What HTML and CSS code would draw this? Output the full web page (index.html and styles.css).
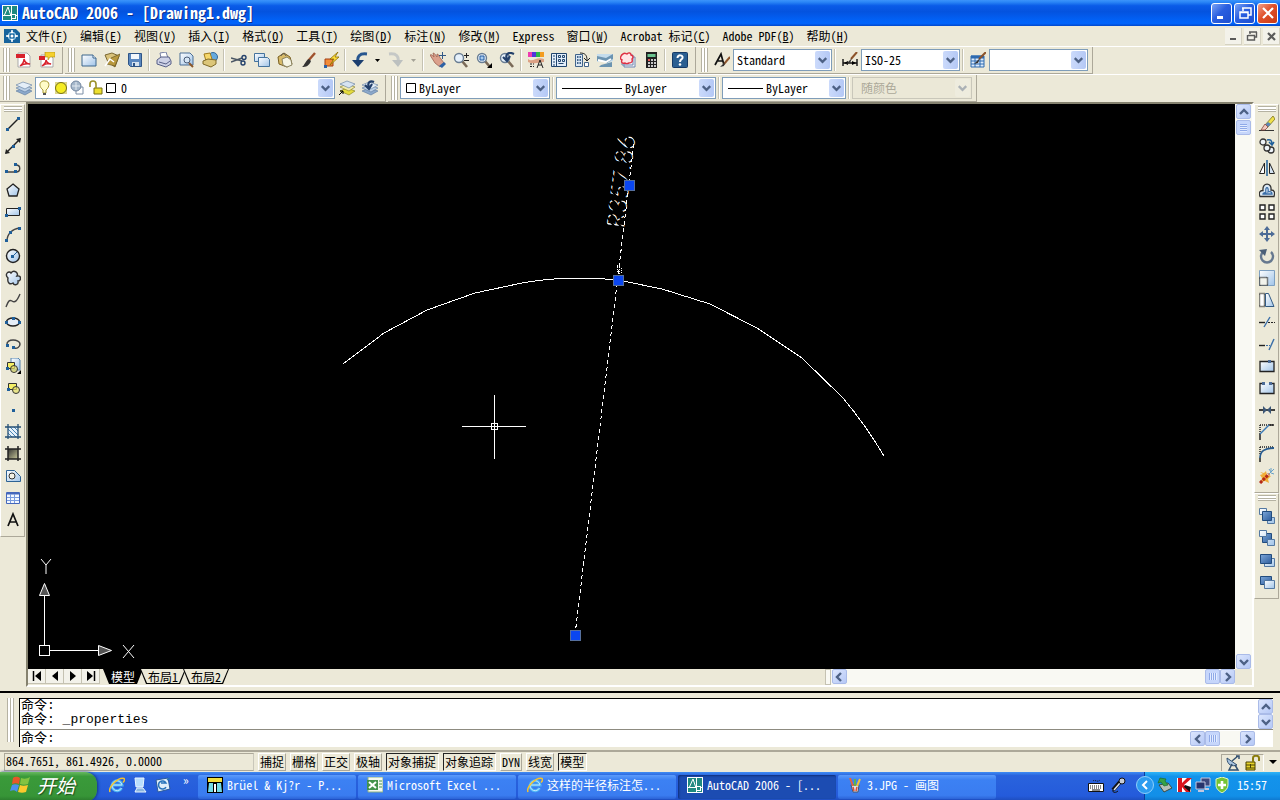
FILE: index.html
```html
<!DOCTYPE html>
<html lang="zh-CN">
  <head>
    <meta charset="UTF-8" />
    <meta name="viewport" content="width=device-width, initial-scale=1.0" />
    <title>AutoCAD 2006 - [Drawing1.dwg]</title>
    <link rel="stylesheet" href="styles.css">
  </head>
  <body>
    <!-- shared symbols -->
    <svg class="symbols" aria-hidden="true">
      <defs>
        <linearGradient id="pale" x1="0" y1="0" x2="1" y2="1">
          <stop offset="0" stop-color="#fff" /><stop offset="1" stop-color="#9fc3e8" />
        </linearGradient>
        <linearGradient id="deep" x1="0" y1="0" x2="1" y2="1">
          <stop offset="0" stop-color="#7da7d9" /><stop offset="1" stop-color="#2c5c9c" />
        </linearGradient>
        <linearGradient id="dusk" x1="0" y1="0" x2="1" y2="1">
          <stop offset="0" stop-color="#333" /><stop offset="1" stop-color="#c8c89a" />
        </linearGradient>
        <pattern id="dashes" width="5" height="5" patternUnits="userSpaceOnUse" patternTransform="rotate(45)">
          <path d="M0 0h3v5H0z" fill="#fff" />
        </pattern>
      </defs>
      <symbol id="down" viewBox="0 0 16 16"><path d="M4 6l4 4 4-4" fill="none" stroke="#4d6185" stroke-width="2.4" /></symbol>
      <symbol id="up" viewBox="0 0 16 16"><path d="M4 10l4-4 4 4" fill="none" stroke="#4d6185" stroke-width="2.4" /></symbol>
      <symbol id="left" viewBox="0 0 16 16"><path d="M10 4L6 8l4 4" fill="none" stroke="#4d6185" stroke-width="2.4" /></symbol>
      <symbol id="right" viewBox="0 0 16 16"><path d="M6 4l4 4-4 4" fill="none" stroke="#4d6185" stroke-width="2.4" /></symbol>
      <symbol id="logo" viewBox="0 0 16 16">
        <rect x=".5" y=".5" width="15" height="15" fill="#1f8a80" stroke="#fff" />
        <path d="M2 11L6 2l3 9M0 10.500h16M9.500 1v14" stroke="#fff" fill="none" />
        <rect x="9.500" y="9.500" width="4" height="4" fill="#1f8a80" stroke="#fff" />
      </symbol>
      <symbol id="ie" viewBox="0 0 16 16">
        <path d="M12.500 11a5 5 0 1 1 .5-3H4" fill="none" stroke="#4db4f5" stroke-width="3" />
        <path d="M12.500 11a5 5 0 1 1 .5-3H4" fill="none" stroke="#c2e9ff" stroke-width="1" />
        <path d="M1 15C-1 10 9 0 15 1.500c1 1 0 3-1 4" fill="none" stroke="#f2c230" stroke-width="1.500" />
      </symbol>
      <symbol id="layers" viewBox="0 0 16 16">
        <path d="M0 11l7-3 9 3-7 4z" fill="#8ca9cb" stroke="#5b789d" stroke-width=".6" />
        <path d="M0 8l7-3 9 3-7 4z" fill="#bcd0e6" stroke="#5b789d" stroke-width=".6" />
        <path d="M0 5l7-3 9 3-7 4z" fill="#e4eef8" stroke="#5b789d" stroke-width=".6" />
      </symbol>
      <symbol id="brush" viewBox="0 0 16 16">
        <path d="M15 1l-7 8" stroke="#a0522d" stroke-width="2.400" /><path d="M9 7l2 2c-2 5-5 6-9 6 3-2 3-6 7-8z" fill="#333" />
      </symbol>
      <symbol id="lens" viewBox="0 0 16 16">
        <path d="M9 9l5 6" stroke="#7a6a58" stroke-width="2.600" /><circle cx="6" cy="6" r="4.500" fill="#e6f1fb" stroke="#697d93" stroke-width="1.400" />
      </symbol>
    </svg>

    <div class="window">
      <header class="titlebar">
        <svg class="icon"><use href="#logo" /></svg>
        <h1>AutoCAD 2006 - [Drawing1.dwg]</h1>
        <div class="caption-buttons">
          <button aria-label="Minimize"><svg class="icon"><path d="M3 12.500h6" stroke="#fff" stroke-width="3" /></svg></button>
          <button aria-label="Restore"><svg class="icon"><path d="M6 6V3h8v7h-3M5 3h9M3 7h8v6H3zM3 7.500h8" stroke="#fff" stroke-width="1.500" fill="none" /></svg></button>
          <button class="close" aria-label="Close"><svg class="icon"><path d="M3 3l10 10M13 3L3 13" stroke="#fff" stroke-width="2.200" /></svg></button>
        </div>
      </header>

      <nav class="menubar">
        <svg class="icon menu-icon"><path d="M0 1h12l4 4v10H0z" fill="#17639c" /><path d="M8 2v12M2 8h12" stroke="#fff" stroke-width="1.500" /><path d="M5 5h6v6H5z" fill="#17639c" stroke="#9cd0ee" /><path d="M8 3l2 2H6zM8 13l2-2H6zM3 8l2-2v4zM13 8l-2-2v4z" fill="#fff" /><circle cx="8" cy="8" r="1.500" fill="#fff" /></svg>
        <button>文件(<u>F</u>)</button>
        <button>编辑(<u>E</u>)</button>
        <button>视图(<u>V</u>)</button>
        <button>插入(<u>I</u>)</button>
        <button>格式(<u>O</u>)</button>
        <button>工具(<u>T</u>)</button>
        <button>绘图(<u>D</u>)</button>
        <button>标注(<u>N</u>)</button>
        <button>修改(<u>M</u>)</button>
        <button>E<u>x</u>press</button>
        <button>窗口(<u>W</u>)</button>
        <button>Acrobat 标记(<u>C</u>)</button>
        <button>Adobe PDF(<u>B</u>)</button>
        <button>帮助(<u>H</u>)</button>
        <div class="doc-buttons">
          <button aria-label="Minimize drawing"><svg class="icon"><path d="M5 11h6" stroke="#5a5a5a" stroke-width="2" /></svg></button>
          <button aria-label="Restore drawing"><svg class="icon"><path d="M6 6V4M5 4h8M12.500 4v5H11M4 7.500h7M3.500 7v5h7V7" stroke="#5a5a5a" stroke-width="1.400" fill="none" /></svg></button>
          <button aria-label="Close drawing"><svg class="icon"><path d="M5 5l7 7M12 5l-7 7" stroke="#5a5a5a" stroke-width="2.200" /></svg></button>
        </div>
      </nav>

      <div class="toolbar-row">
        <div class="toolbar">
          <i class="grip"></i>
          <button class="tool" aria-label="Create PDF"><svg class="icon"><path d="M2 1h9l3 3v11H2z" fill="#fff" stroke="#a9a9a9" /><path d="M0 2h9v4H0z" fill="#d8222c" /><path d="M4 14c3-2 4-5 4-7 1 4 3 5 6 5-4-1-7 0-10 2z" fill="none" stroke="#d8222c" stroke-width="1.500" /></svg></button>
          <button class="tool" aria-label="PDF comments"><svg class="icon"><path d="M2 3h9l3 3v9H2z" fill="#fff" stroke="#a9a9a9" /><path d="M6 0h10v5h-5l-2 3V5H6z" fill="#f5d02c" stroke="#a88c10" stroke-width=".6" /><path d="M0 4h6v4H0z" fill="#d8222c" /><path d="M3 14c3-2 4-4 4-6 1 3 3 4 5 4-3-1-6 0-9 2z" fill="none" stroke="#d8222c" stroke-width="1.500" /></svg></button>
        </div>
        <div class="toolbar">
          <i class="grip"></i>
          <button class="tool" aria-label="New"><svg class="icon"><path d="M1 3h11l3 3v8H1z" fill="url(#pale)" stroke="#3d668c" /><path d="M12 3v3h3" fill="#fff" stroke="#3d668c" /></svg></button>
          <button class="tool" aria-label="Open"><svg class="icon"><path d="M1 3l7-2 7 3-4 11-7-5z" fill="#d9c27a" stroke="#7a6731" /><path d="M3 12l4-6 9-4-5 12z" fill="#b8983e" stroke="#6a5720" stroke-width=".7" /><path d="M1 14l5-7 4 3" stroke="#fff" fill="none" stroke-width="1.500" /></svg></button>
          <button class="tool" aria-label="Save"><svg class="icon"><path d="M1.500 1.500h13v13h-11l-2-2z" fill="#5a87bf" stroke="#2f5587" /><path d="M4 2h8v5H4z" fill="#f3f7fb" /><path d="M5 10h7v4H5z" fill="#d5e2ef" /><path d="M6 11h2v3H6z" fill="#2f5587" /></svg></button>
          <i class="sep"></i>
          <button class="tool" aria-label="Plot"><svg class="icon"><path d="M4 1l6-1 2 6H5z" fill="#fff" stroke="#7780a3" /><path d="M1 8l4-3h8l2 4v3l-5 3-9-3z" fill="#cdd1e6" stroke="#575f86" /><path d="M3 10l7 2 4-3" stroke="#575f86" fill="none" /></svg></button>
          <button class="tool" aria-label="Plot preview"><svg class="icon"><path d="M1 1h10l3 3v9H1z" fill="url(#pale)" stroke="#4b6f96" /><path d="M10 11l4 4" stroke="#8b572a" stroke-width="2" /><circle cx="8" cy="8" r="3" fill="#d6e6f5" stroke="#4b5d78" /></svg></button>
          <button class="tool" aria-label="Publish"><svg class="icon"><circle cx="11" cy="5" r="4.500" fill="#65a9dd" stroke="#326899" /><path d="M2 2l6-1 2 6-6 2z" fill="#f5d76b" stroke="#a17b1c" /><path d="M1 9l5-2 8 1v4l-5 3-8-3z" fill="#dcc679" stroke="#806a28" /></svg></button>
          <i class="sep"></i>
          <button class="tool" aria-label="Cut"><svg class="icon"><path d="M0 6l11 3M0 10l11-4" stroke="#4a5664" stroke-width="1.400" /><circle cx="13" cy="5.500" r="2" fill="none" stroke="#23416b" stroke-width="1.400" /><circle cx="12" cy="11" r="2" fill="none" stroke="#23416b" stroke-width="1.400" /></svg></button>
          <button class="tool" aria-label="Copy"><svg class="icon"><path d="M.5 1.500h10v8H.5z" fill="url(#pale)" stroke="#45739d" /><path d="M4.500 5.500h9l2 2v7h-11z" fill="url(#pale)" stroke="#45739d" /></svg></button>
          <button class="tool" aria-label="Paste"><svg class="icon"><path d="M1 5l6-4 6 4 2 7-5 3-8-3z" fill="#d8bb69" stroke="#7a6022" /><path d="M5 7l5-2 4 3 1 5-5 2-4-2z" fill="#f5f4e4" stroke="#8a8361" /><path d="M4 4c1-3 4-3 5 0" stroke="#555" fill="none" /></svg></button>
          <button class="tool" aria-label="Match properties"><svg class="icon"><use href="#brush" /></svg></button>
          <button class="tool" aria-label="Block editor"><svg class="icon"><path d="M2 7h8v7H2z" fill="#f28c38" stroke="#a33e15" /><path d="M15 0L7 7h4l-4 6 9-8h-4l3-5z" fill="#ffde3a" stroke="#8c6c00" stroke-width=".8" /><path d="M1 13h3v3H1z" fill="#2b62a6" /></svg></button>
          <i class="sep"></i>
          <button class="tool" aria-label="Undo"><svg class="icon"><path d="M15 2C7 1 5 5 6 10" fill="none" stroke="#27568f" stroke-width="3" /><path d="M0 8h12l-6 7z" fill="#1c3f70" /></svg></button>
          <button class="tool drop" aria-label="Undo list"><svg><path d="M1 1h5L3.500 4z" /></svg></button>
          <button class="tool" aria-label="Redo"><svg class="icon"><path d="M1 2c8-1 10 3 9 8" fill="none" stroke="#c5c8c6" stroke-width="3" /><path d="M4 8h11l-5 7z" fill="#bcc0bf" /></svg></button>
          <button class="tool drop off" aria-label="Redo list"><svg><path d="M1 1h5L3.500 4z" /></svg></button>
          <i class="sep"></i>
          <button class="tool" aria-label="Pan"><svg class="icon"><path d="M0 3c2-1 3 1 4 2L3 1c2 0 3 3 4 4V2c2 0 2 3 4 5l3 4-4 4-5-4z" fill="#dba08c" stroke="#9c6251" stroke-width=".8" /><path d="M9 14l5-4 2 2-4 4z" fill="#2d62a5" /><path d="M12.500 0v7M9 3.500h7" stroke="#315887" /></svg></button>
          <button class="tool" aria-label="Zoom realtime"><svg class="icon"><use href="#lens" /><path d="M13.500 1v5M11 3.500h5M11 8.500h5" stroke="#222" /></svg></button>
          <button class="tool" aria-label="Zoom window"><svg class="icon"><use href="#lens" /><path d="M4 4h4v4H4z" fill="#a9cdf0" stroke="#245aa0" /><path d="M16 11v5h-5z" /></svg></button>
          <button class="tool" aria-label="Zoom previous"><svg class="icon"><use href="#lens" /><path d="M15 2C9-1 6 3 8 7M4 5l4 4 3-5" fill="none" stroke="#23406b" stroke-width="2.200" /></svg></button>
          <i class="sep"></i>
          <button class="tool" aria-label="Properties"><svg class="icon"><path d="M0 0h4v5H0z" fill="#ee3bb0" /><path d="M4 0h4v5H4z" fill="#5135dd" /><path d="M8 0h4v5H8z" fill="#2db44b" /><path d="M12 0h4v5h-4z" fill="#f39c1f" /><path d="M0 7c5 4 8-3 16 0v3c-6 0-8 3-16 0z" fill="#dca184" /><path d="M2 12h4M2 14.500h4" stroke="#222" stroke-dasharray="2 1" /><path d="M9 16l3-8 3 8M10 13h4" stroke="#222" fill="none" /></svg></button>
          <button class="tool" aria-label="DesignCenter"><svg class="icon"><path d="M.5 1.500h15v13H.5z" fill="#e2eefa" stroke="#20456e" /><path d="M5.500 2v12" stroke="#20456e" /><path d="M2 4h2M2 7h2M2 10h2M2 13h2" stroke="#20456e" /><path d="M7.500 3.500h2v2h-2zM11.500 3.500h2v2h-2zM7.500 7.500h2v2h-2zM11.500 7.500h2v2h-2zM7.500 11.500h5" fill="none" stroke="#20456e" /></svg></button>
          <button class="tool" aria-label="Tool palettes"><svg class="icon"><path d="M1.500 2.500h7v12h-7z" fill="#dbe8f5" stroke="#41648b" /><path d="M3 5h4M3 8h4M3 11h4" stroke="#41648b" stroke-width="2" stroke-dasharray="1.500 1" /><path d="M6 1c5 0 7 2 7 7M10 6l3 3 3-3" fill="none" stroke="#222" /><path d="M10.500 10.500h4v4h-4z" fill="#fff" stroke="#41648b" /></svg></button>
          <button class="tool" aria-label="Sheet set manager"><svg class="icon"><path d="M0 2h16v7l-5 2-4-3-7 2z" fill="#c4dcec" /><path d="M0 4l9 2 7-4v5l-6 4-4-2H0zM4 13l11-3v5H2z" fill="#6c94b1" /><path d="M1 8l8 2 5-3" stroke="#fff" stroke-width="2" fill="none" /></svg></button>
          <button class="tool" aria-label="Markup set manager"><svg class="icon"><path d="M4 5h11v10H4zM2 3h11v10H2z" fill="#f4f4f4" stroke="#6d87b3" /><path d="M3 2c2-2 3 0 4 0 2-2 4-1 4 1 3 1 2 3 1 4 1 3-1 4-3 4-2 1-3 1-4 0-3 1-4-1-3-3-3-1-1-5 1-6z" fill="#ffe6e6" stroke="#df2f42" stroke-width="1.400" /></svg></button>
          <button class="tool" aria-label="QuickCalc"><svg class="icon"><path d="M3 0h11v16H3z" fill="#202020" /><path d="M4.500 2h8v3h-8z" fill="#6ac28e" /><path d="M5 8h8M5 11h8M5 14h8" stroke="#fff" stroke-width="1.600" stroke-dasharray="2 1" /><path d="M5 8h2" stroke="#e33" stroke-width="1.600" /></svg></button>
          <i class="sep"></i>
          <button class="tool" aria-label="Help"><svg class="icon"><rect x=".5" y=".5" width="15" height="15" rx="1" fill="#2b5f91" stroke="#163a66" /><path d="M5.500 6c0-4 6-3 5 0-.5 1.500-2.500 1.500-2.500 4" fill="none" stroke="#fff" stroke-width="2" /><circle cx="8" cy="12.500" r="1.300" fill="#fff" /></svg></button>
        </div>
        <div class="toolbar">
          <i class="grip"></i>
          <button class="tool" aria-label="Text style"><svg class="icon"><path d="M1 13L7 2l3 11M4 9h5" stroke="#111" stroke-width="1.700" fill="none" /><path d="M16 5l-6 7" stroke="#8d542b" stroke-width="2" /><path d="M11 10l-1 4-4 1z" fill="#333" /></svg></button>
          <span class="combo w-style"><select aria-label="Text style"><option>Standard</option></select><svg class="arrow"><use href="#down" /></svg></span>
          <i class="sep"></i>
          <button class="tool" aria-label="Dimension style"><svg class="icon"><path d="M1 7v7M15 7v7M1 11h14" stroke="#111" stroke-width="1.400" /><path d="M2 11l4-2v4zM14 11l-4-2v4z" /><path d="M15 0L9 7" stroke="#8d542b" stroke-width="2" /><path d="M10 6l-2 5-4 1z" fill="#333" /></svg></button>
          <span class="combo w-style"><select aria-label="Dimension style"><option>ISO-25</option></select><svg class="arrow"><use href="#down" /></svg></span>
          <i class="sep"></i>
          <button class="tool" aria-label="Table style"><svg class="icon"><path d="M1 4h13v11H1z" fill="#dceafa" stroke="#2d6ab0" /><path d="M1 5h13" stroke="#2d6ab0" stroke-width="3" /><path d="M1 9h13M1 12h13M5 6v9M10 6v9" stroke="#2d6ab0" /><path d="M16 0L9 7" stroke="#8d542b" stroke-width="2" /><path d="M10 6l-2 5-4 1z" fill="#333" /></svg></button>
          <span class="combo w-style"><select aria-label="Table style"><option></option></select><svg class="arrow"><use href="#down" /></svg></span>
        </div>
      </div>

      <div class="toolbar-row">
        <div class="toolbar">
          <i class="grip"></i>
          <button class="tool" aria-label="Layer properties"><svg class="icon"><use href="#layers" /></svg></button>
          <span class="combo w-layer">
            <select aria-label="Layer"><option>0</option></select>
            <svg class="mark" width="80" height="18">
              <path d="M5 11c-6-5-2-10 2-9 5 0 5 6 1 9v3H5z" fill="#fffcc9" stroke="#a79832" /><path d="M5 15h3" stroke="#555" stroke-width="2" />
              <path d="M17 3h12v12H17z" fill="#ddd68a" /><circle cx="23" cy="9" r="5.500" fill="#f5ec23" stroke="#77711a" />
              <path d="M38 8h7v7h-7z" fill="#fff" stroke="#7c8fa6" /><circle cx="38" cy="7" r="5" fill="#a5b7ca" stroke="#7387a0" /><path d="M34 7h8M38 3v8" stroke="#e4ebf2" />
              <path d="M56 9h8v6h-8z" fill="#ecdf2e" stroke="#756d13" /><path d="M52 8V5c0-4 6-4 6 0v4" fill="none" stroke="#9b912a" stroke-width="1.600" />
              <path d="M68.500 4.500h9v9h-9z" fill="#fff" stroke="#000" />
            </svg>
            <svg class="arrow"><use href="#down" /></svg>
          </span>
          <button class="tool" aria-label="Make layer current"><svg class="icon"><path d="M1 11l7-3 8 3-6 4z" fill="#e5dc3e" stroke="#807817" stroke-width=".6" /><path d="M1 7l7-3 8 3-6 4z" fill="#f2ebaf" stroke="#807817" stroke-width=".6" /><path d="M1 4l7-3 8 3-6 4z" fill="#d6e3f1" stroke="#5b789d" stroke-width=".6" /><path d="M0 15l4-4M1 11h3v3" stroke="#000" fill="none" /></svg></button>
          <button class="tool" aria-label="Layer previous"><svg class="icon"><use href="#layers" /><path d="M12 2C8 0 5 3 7 7M3 5l4 4 3-5" fill="none" stroke="#23406b" stroke-width="2.200" /></svg></button>
        </div>
        <div class="toolbar">
          <i class="grip"></i>
          <span class="combo w-color">
            <select aria-label="Color"><option>ByLayer</option></select>
            <svg class="mark" width="16" height="18"><path d="M3.500 4.500h9v9h-9z" fill="#fff" stroke="#000" /></svg>
            <svg class="arrow"><use href="#down" /></svg>
          </span>
          <i class="sep"></i>
          <span class="combo w-ltype">
            <select aria-label="Linetype"><option>ByLayer</option></select>
            <svg class="mark" width="66" height="18"><path d="M3 9.500h60" stroke="#000" /></svg>
            <svg class="arrow"><use href="#down" /></svg>
          </span>
          <i class="sep"></i>
          <span class="combo w-lweight">
            <select aria-label="Lineweight"><option>ByLayer</option></select>
            <svg class="mark" width="40" height="18"><path d="M3 9.500h35" stroke="#000" /></svg>
            <svg class="arrow"><use href="#down" /></svg>
          </span>
          <i class="sep"></i>
          <span class="combo w-plot disabled"><select aria-label="Plot style" disabled><option>随颜色</option></select><svg class="arrow"><use href="#down" /></svg></span>
        </div>
      </div>

      <main class="workspace">
        <aside class="dock">
          <div class="toolbar vertical">
            <i class="grip"></i>
            <button class="tool" aria-label="Line"><svg class="icon"><path d="M2 14L14 2" stroke="#222" stroke-width="1.400" /><path d="M1 12h3v3H1zM12 1h3v3h-3z" fill="#1f5f9a" /></svg></button>
            <button class="tool" aria-label="Construction line"><svg class="icon"><path d="M1 15L15 1" stroke="#222" stroke-width="1.400" /><path d="M16 0l-1 5-4-4zM0 16l1-5 4 4z" fill="#222" /><path d="M7 7h3v3H7z" fill="#1f5f9a" /></svg></button>
            <button class="tool" aria-label="Polyline"><svg class="icon"><path d="M1 12h10c5 0 5-7 0-7" fill="none" stroke="#444" stroke-width="1.400" /><path d="M0 10h3v3H0zM9 10h3v3H9zM9 3h3v3H9z" fill="#1f5f9a" /></svg></button>
            <button class="tool" aria-label="Polygon"><svg class="icon"><path d="M8 2l6 5-2 7H4L2 7z" fill="url(#pale)" stroke="#222" stroke-width="1.300" /></svg></button>
            <button class="tool" aria-label="Rectangle"><svg class="icon"><path d="M1.500 4.500h13v7h-13z" fill="url(#pale)" stroke="#222" /><path d="M0 10h3v3H0zM13 3h3v3h-3z" fill="#1f5f9a" /></svg></button>
            <button class="tool" aria-label="Arc"><svg class="icon"><path d="M2 15C2 8 7 3 15 2" fill="none" stroke="#444" stroke-width="1.400" /><path d="M0 13h3v3H0zM4 5h3v3H4zM13 1h3v3h-3z" fill="#1f5f9a" /></svg></button>
            <button class="tool" aria-label="Circle"><svg class="icon"><circle cx="8" cy="8" r="6.500" fill="url(#pale)" stroke="#222" stroke-width="1.400" /><path d="M7 9l5-5" stroke="#1f5f9a" /><path d="M6 7h3v3H6z" fill="#1f5f9a" /></svg></button>
            <button class="tool" aria-label="Revision cloud"><svg class="icon"><path d="M3 8C-1 4 4 0 6 3c3-4 8 0 6 3 5-1 4 5 1 5 1 4-4 5-5 2-3 2-6 0-5-5z" fill="url(#pale)" stroke="#333" stroke-width="1.400" /></svg></button>
            <button class="tool" aria-label="Spline"><svg class="icon"><path d="M1 15c2-5 3-8 6-6s5 0 8-7" fill="none" stroke="#444" stroke-width="1.400" /></svg></button>
            <button class="tool" aria-label="Ellipse"><svg class="icon"><ellipse cx="8" cy="8" rx="6.500" ry="4" fill="#e6eef7" stroke="#222" stroke-width="1.400" /><path d="M0 7h3v3H0zM13 7h3v3h-3zM7 3h3v3H7z" fill="#1f5f9a" /></svg></button>
            <button class="tool" aria-label="Ellipse arc"><svg class="icon"><path d="M2 9c-1-7 13-6 13-1 0 3-3 5-6 4" fill="none" stroke="#444" stroke-width="1.500" /><path d="M1 8h3v3H1zM7 10h3v3H7z" fill="#1f5f9a" /></svg></button>
            <button class="tool" aria-label="Insert block"><svg class="icon"><path d="M6 0h7l2 2v10H6z" fill="url(#pale)" stroke="#5784ae" /><path d="M2.500 4.500h7v6h-7z" fill="#f4ef65" stroke="#333" /><circle cx="9" cy="11" r="3.500" fill="#e7e06a" fill-opacity=".7" stroke="#333" /><path d="M1 9h3v3H1z" fill="#1f5f9a" /><path d="M16 12v4h-4z" /></svg></button>
            <button class="tool" aria-label="Make block"><svg class="icon"><path d="M3.500 3.500h8v6h-8z" fill="#f4ef65" stroke="#333" /><circle cx="11" cy="10" r="3.500" fill="#e7e06a" fill-opacity=".7" stroke="#333" /><path d="M2 8h3v3H2z" fill="#1f5f9a" /></svg></button>
            <button class="tool" aria-label="Point"><svg class="icon"><path d="M7 7h3v3H7z" fill="#1f5f9a" /></svg></button>
            <button class="tool" aria-label="Hatch"><svg class="icon"><path d="M3 3h10v10H3z" fill="#e7f1fa" /><path d="M3 5l8 8M3 9l4 4M5 3l8 8M9 3l4 4" stroke="#4a85b5" /><path d="M3 0v15M13 0v15M0 3h16M0 13h16" stroke="#244f76" stroke-width="1.300" /></svg></button>
            <button class="tool" aria-label="Gradient"><svg class="icon"><path d="M3 3h10v10H3z" fill="url(#dusk)" /><path d="M3 0v15M13 0v15M0 3h16M0 13h16" stroke="#222" stroke-width="1.500" /></svg></button>
            <button class="tool" aria-label="Region"><svg class="icon"><path d="M1.500 2.500h8l6 6v5h-14z" fill="url(#pale)" stroke="#2d6294" /><circle cx="7" cy="8" r="3" fill="#f3f1e6" stroke="#333" /></svg></button>
            <button class="tool" aria-label="Table"><svg class="icon"><path d="M1.500 2.500h13v11h-13z" fill="#f2f7ff" stroke="#4467bb" /><path d="M2 3.500h12" stroke="#4467bb" stroke-width="2" /><path d="M2 7.500h12M2 10.500h12M5.500 4v9M9.500 4v9" stroke="#789bdd" /></svg></button>
            <button class="tool" aria-label="Multiline text"><svg class="icon"><path d="M3 14L8 2l5 12M5 10h6" fill="none" stroke="#111" stroke-width="1.700" /></svg></button>
          </div>
        </aside>

        <section class="frame">
          <div class="frame-view">
            <svg class="canvas" viewBox="28 104 1207 565" preserveAspectRatio="xMidYMid meet">
              <g fill="none" stroke="#fff" shape-rendering="crispEdges">
                <path d="M343 364L384 333L427 310L475 293L522 283Q550 278 578 278Q598 278 618 280L662 289L710 304L757 328L802 358L843 398Q865 424 884 456" />
                <path d="M575 635L634 142" stroke-dasharray="4 3" />
                <path d="M462 426.500h64M494.500 395v64" />
                <path d="M491.500 423.500h6v6h-6z" />
                <path d="M617.500 265v8M619.500 267v8M621.500 268v5M617 266l4 2" stroke-dasharray="1 1" />
                <path d="M44.500 645V596M50 650.500h48" />
                <path d="M39.500 645.500h10v10h-10z" />
              </g>
              <g fill="#555" stroke="#fff">
                <path d="M39.500 595.500h10l-5-12z" />
                <path d="M98.500 645.500v10l13-5z" />
              </g>
              <text class="dim-text" transform="translate(624 229) rotate(-83)">R357.86</text>
              <path d="M41 559l5 6 5-6M46 565v9M123 645l11 13M134 645l-11 13" fill="none" stroke="#fff" />
              <g fill="#0a46f0" stroke="#566f9c">
                <rect x="624.500" y="180.500" width="10" height="10" />
                <rect x="613.500" y="275.500" width="10" height="10" />
                <rect x="570.500" y="630.500" width="10" height="10" />
              </g>
            </svg>
            <div class="scroll vscroll">
              <button class="scroll-btn" aria-label="Scroll up"><svg class="icon"><use href="#up" /></svg></button>
              <span class="thumb"></span>
              <button class="scroll-btn end" aria-label="Scroll down"><svg class="icon"><use href="#down" /></svg></button>
            </div>
          </div>
          <div class="frame-foot">
            <div class="tab-nav">
              <button aria-label="First tab"><svg class="icon"><path d="M4.500 3v10" stroke="#000" stroke-width="1.500" /><path d="M12 3v10L6 8z" /></svg></button>
              <button aria-label="Previous tab"><svg class="icon"><path d="M11 3v10L5 8z" /></svg></button>
              <button aria-label="Next tab"><svg class="icon"><path d="M5 3v10l6-5z" /></svg></button>
              <button aria-label="Last tab"><svg class="icon"><path d="M4 3v10l6-5z" /><path d="M11.500 3v10" stroke="#000" stroke-width="1.500" /></svg></button>
            </div>
            <div class="tabs">
              <button class="tab active"><span>模型</span></button>
              <button class="tab"><span>布局1</span></button>
              <button class="tab"><span>布局2</span></button>
            </div>
            <div class="scroll hscroll">
              <span class="splitter"></span>
              <button class="scroll-btn" aria-label="Scroll left"><svg class="icon"><use href="#left" /></svg></button>
              <span class="thumb end"></span>
              <button class="scroll-btn" aria-label="Scroll right"><svg class="icon"><use href="#right" /></svg></button>
            </div>
          </div>
        </section>

        <aside class="dock">
          <div class="toolbar vertical">
            <i class="grip"></i>
            <button class="tool" aria-label="Erase"><svg class="icon"><path d="M0 14.500h15" stroke="#333" /><path d="M14 0l2 3-7 8-3-2z" fill="#efe14b" stroke="#7c711b" stroke-width=".8" /><path d="M9 6l3 2-3 3-3-2z" fill="#5a86b5" /><path d="M6 8l3 3-3 3H2z" fill="#f2c8bf" stroke="#85463c" stroke-width=".8" /></svg></button>
            <button class="tool" aria-label="Copy object"><svg class="icon"><circle cx="4" cy="4" r="3" fill="#eef4fa" stroke="#333" stroke-width="1.300" /><circle cx="12" cy="12" r="3" fill="#eef4fa" stroke="#333" stroke-width="1.300" /><circle cx="8" cy="10" r="3" fill="#eef4fa" stroke="#333" stroke-width="1.300" /><path d="M8 2c3-1 5 0 5 4M10 4l3 3 2-3" fill="none" stroke="#1f5f9a" stroke-width="1.500" /></svg></button>
            <button class="tool" aria-label="Mirror"><svg class="icon"><path d="M5.500 3v10.500h-5z" fill="#fff" stroke="#222" /><path d="M10.500 3v10.500h5z" fill="#d4e3f2" stroke="#222" /><path d="M8 0v16" stroke="#1f5f9a" stroke-width="1.500" /></svg></button>
            <button class="tool" aria-label="Offset"><svg class="icon"><path d="M1 14.500c-2-5 1-6 3-6C3 0 13 0 12 8c4 0 4 3 3 6.500z" fill="#dce9f5" stroke="#333" stroke-width="1.300" /><path d="M4 12c0-1 2-2 3-1-1-7 3-7 2-1 2-1 4 0 4 2z" fill="#eef4fa" stroke="#3a6ea8" stroke-width="1.300" /></svg></button>
            <button class="tool" aria-label="Array"><svg class="icon"><path d="M1 1h5v5H1zM10 1h5v5h-5zM1 10h5v5H1zM10 10h5v5h-5z" fill="#fff" stroke="#222" stroke-width="1.400" /></svg></button>
            <button class="tool" aria-label="Move"><svg class="icon"><path d="M8 2v12M2 8h12" stroke="#4c6b96" stroke-width="2" /><path d="M8 0l3 4H5zM8 16l3-4H5zM0 8l4-3v6zM16 8l-4-3v6z" fill="#4c6b96" /></svg></button>
            <button class="tool" aria-label="Rotate"><svg class="icon"><path d="M12 4a6 6 0 1 1-8 0" fill="none" stroke="#66788f" stroke-width="2.400" /><path d="M0 2l8-1-2 7z" fill="#4c6078" /></svg></button>
            <button class="tool" aria-label="Scale"><svg class="icon"><path d="M.5.5h15v15H.5z" fill="url(#pale)" stroke="#7da0c2" /><path d="M.5 7.500h8v8h-8z" fill="#f2f3ec" /><path d="M.5 15.500v-8h8v8z" fill="none" stroke="#111" stroke-width="1.500" stroke-dasharray="1 1" /></svg></button>
            <button class="tool" aria-label="Stretch"><svg class="icon"><path d="M.5 1.500h5v13h-5z" fill="#fff" stroke="#111" stroke-width="1.500" stroke-dasharray="1 1" /><path d="M6.500 1.500h3l5.500 13H6.500z" fill="url(#pale)" stroke="#335b85" /></svg></button>
            <button class="tool" aria-label="Trim"><svg class="icon"><path d="M0 8.500h6" stroke="#222" stroke-width="1.400" /><path d="M9 8.500h7" stroke="#222" stroke-dasharray="2 1" /><path d="M5 13l6-10" stroke="#3a6ea8" stroke-width="1.400" /></svg></button>
            <button class="tool" aria-label="Extend"><svg class="icon"><path d="M0 9.500h6" stroke="#222" stroke-width="1.400" /><path d="M7 9.500h4" stroke="#3a6ea8" stroke-dasharray="2 1" /><path d="M10 14l5-11" stroke="#3a6ea8" stroke-width="1.400" /></svg></button>
            <button class="tool" aria-label="Break at point"><svg class="icon"><path d="M1 3.500h14v10H1z" fill="url(#pale)" stroke="#222" stroke-width="1.300" /><path d="M9 2h3v3H9z" fill="#4c6b96" /></svg></button>
            <button class="tool" aria-label="Break"><svg class="icon"><path d="M1 3h14v11H1z" fill="url(#pale)" /><path d="M4 3.500H1v10h14v-10h-3" fill="none" stroke="#222" stroke-width="1.300" /><path d="M3 2h3v3H3zM10 2h3v3h-3z" fill="#4c6b96" /></svg></button>
            <button class="tool" aria-label="Join"><svg class="icon"><path d="M0 8h16" stroke="#222" stroke-width="1.700" /><path d="M4 4l4 4-4 4zM12 4L8 8l4 4z" fill="#3d5877" /></svg></button>
            <button class="tool" aria-label="Chamfer"><svg class="icon"><path d="M1 1h13M1 1v8" stroke="#222" stroke-dasharray="1 1" stroke-width="1.500" /><path d="M1 9v7M10 1h5" stroke="#222" stroke-width="1.500" /><path d="M1 10l9-9" stroke="#3a7ab5" stroke-width="1.500" /></svg></button>
            <button class="tool" aria-label="Fillet"><svg class="icon"><path d="M1 1h14M1 1v8" stroke="#222" stroke-dasharray="1 1" stroke-width="1.500" /><path d="M1 16v-4" stroke="#222" stroke-width="1.500" /><path d="M1 12C1 5 6 2 15 2" fill="none" stroke="#275b8e" stroke-width="1.800" /></svg></button>
            <button class="tool" aria-label="Explode"><svg class="icon"><path d="M1 4l4 1 2-2 1 4 4 1-3 3 1 4-4-2-4 1 1-4-2-3 3-1z" fill="#f0ae38" /><path d="M1 15L10 6" stroke="#b52916" stroke-width="3" stroke-dasharray="3 1" /><path d="M10 6l5-5M10 1l2 3M15 6l-3-1M12 0v3" stroke="#67a1c7" /></svg></button>
          </div>
          <div class="toolbar vertical order">
            <i class="grip"></i>
            <button class="tool" aria-label="Bring to front"><svg class="icon"><path d="M.5.5h7v6h-7zM8.500 9.500h7v6h-7z" fill="url(#pale)" stroke="#5479a2" /><path d="M3.500 3.500h9v9h-9z" fill="url(#deep)" stroke="#224c7e" /></svg></button>
            <button class="tool" aria-label="Send to back"><svg class="icon"><path d="M3.500 3.500h9v9h-9z" fill="url(#deep)" stroke="#224c7e" /><path d="M.5.5h7v6h-7zM8.500 9.500h7v6h-7z" fill="url(#pale)" stroke="#5479a2" /></svg></button>
            <button class="tool" aria-label="Bring above object"><svg class="icon"><path d="M5.500 6.500h10v8h-10z" fill="url(#pale)" stroke="#5479a2" /><path d="M1.500 2.500h11v9h-11z" fill="url(#deep)" stroke="#224c7e" /></svg></button>
            <button class="tool" aria-label="Send under object"><svg class="icon"><path d="M1.500 2.500h11v8h-11z" fill="url(#deep)" stroke="#224c7e" /><path d="M5.500 6.500h10v8h-10z" fill="url(#pale)" stroke="#5479a2" /></svg></button>
          </div>
        </aside>
      </main>

      <section class="command">
        <i class="grip tall"></i>
        <div class="command-box">
          <div class="history">
            <div class="log">
              <p>命令:</p>
              <p>命令: _properties</p>
            </div>
            <div class="history-scroll">
              <button class="scroll-btn" aria-label="History up"><svg class="icon"><use href="#up" /></svg></button>
              <button class="scroll-btn" aria-label="History down"><svg class="icon"><use href="#down" /></svg></button>
            </div>
          </div>
          <div class="prompt">
            <label for="cmd">命令:</label>
            <input id="cmd" type="text" autocomplete="off" />
            <div class="scroll prompt-scroll">
              <button class="scroll-btn" aria-label="Prompt left"><svg class="icon"><use href="#left" /></svg></button>
              <span class="thumb"></span>
              <button class="scroll-btn end" aria-label="Prompt right"><svg class="icon"><use href="#right" /></svg></button>
            </div>
          </div>
        </div>
      </section>

      <footer class="statusbar">
        <div class="coords">864.7651, 861.4926, 0.0000</div>
        <button>捕捉</button>
        <button>栅格</button>
        <button>正交</button>
        <button>极轴</button>
        <button class="on">对象捕捉</button>
        <button class="on">对象追踪</button>
        <button>DYN</button>
        <button>线宽</button>
        <button class="on">模型</button>
        <div class="status-tray">
          <svg class="icon"><path d="M2 3c0 7 5 9 10 7z" fill="#a9c4df" stroke="#33506f" /><path d="M7 6l6-5M11 1h3v3M7 9l-3 6h9l-3-5" fill="none" stroke="#33506f" stroke-width="1.500" /></svg>
          <svg class="icon"><path d="M2 7h9v8H2z" fill="#e6d22a" stroke="#4b4300" /><path d="M9 7V3c0-3 6-3 6 0v3" fill="none" stroke="#8b7c0c" stroke-width="2" /><path d="M2 10h9M2 13h9M6.500 9v4" stroke="#4b4300" /></svg>
        </div>
        <button class="status-menu" aria-label="Status bar menu"><svg width="8" height="6"><path d="M0 1h8L4 5z" /></svg></button>
      </footer>
    </div>

    <div class="taskbar">
      <button class="start">
        <svg width="22" height="22"><path d="M3 4c3-2 5-1 7 0L9 10c-2-1-4-1-7 0z" fill="#e8562a" /><path d="M11 4c3 1 6 1 9-1l-2 7c-3 1-5 1-8 0z" fill="#83c341" /><path d="M2 11c2-1 4-1 7 0l-2 7c-2-2-4-2-7-1z" fill="#4c8ff0" /><path d="M10 11c2 1 5 1 8 0l-2 7c-3 1-5 1-8 0z" fill="#fbc92d" /></svg>
        开始
      </button>
      <div class="quick">
        <a href="#" aria-label="Internet Explorer"><svg class="icon"><use href="#ie" /></svg></a>
        <a href="#" aria-label="Show desktop"><svg class="icon"><path d="M3 1h9l-1 9H4z" fill="#b8defd" stroke="#eaf6ff" /><path d="M5 11h6l3 4H3z" fill="#8bb6df" stroke="#eaf6ff" /></svg></a>
        <a href="#" aria-label="Outlook Express"><svg class="icon"><path d="M1 3l12-2 2 11-12 3z" fill="#e1effa" stroke="#2a5a9b" /><path d="M11 10a4 4 0 1 1 0-4H6M12 3l3-2" fill="none" stroke="#2773ba" stroke-width="1.500" /></svg></a>
        <span class="more">»</span>
      </div>
      <div class="tasks">
        <button><svg class="icon"><path d="M0 0h16v16H0z" /><path d="M1 1h14v4H1z" fill="#f2df3e" /><path d="M2 6h4v9H1zM10 6h4l1 9h-5z" fill="#74dbe6" /><path d="M7 7h2v8H7z" fill="#fff" /></svg><span>Brüel &amp; Kj?r - P...</span></button>
        <button><svg class="icon"><path d="M1 0h15v15H1z" fill="#f3f8ef" stroke="#8ab083" /><path d="M0 3h11v10H0z" fill="#43924b" /><path d="M2 5l7 6M9 5l-7 6" stroke="#fff" stroke-width="2" /><path d="M12 4h3M12 7h3M12 10h3" stroke="#43924b" /></svg><span>Microsoft Excel ...</span></button>
        <button><svg class="icon"><use href="#ie" /></svg><span>这样的半径标注怎...</span></button>
        <button class="current"><svg class="icon"><use href="#logo" /></svg><span>AutoCAD 2006 - [...</span></button>
        <button><svg class="icon"><path d="M4 8h8l-1 7H6z" fill="#d7dfe9" stroke="#4b566d" /><path d="M6 9L3 1" stroke="#e4643a" stroke-width="2" /><path d="M8 9V2" stroke="#62b34a" stroke-width="2" /><path d="M10 9l3-7" stroke="#efc23b" stroke-width="2" /><path d="M6 10l1 4M10 10l-1 4" stroke="#dd4f32" stroke-width="1.500" /></svg><span>3.JPG - 画图</span></button>
      </div>
      <div class="language">
        <svg class="icon"><path d="M.5 6.500h15v8H.5z" fill="#fff" stroke="#111" /><path d="M2 9h12M2 11h12" stroke="#111" stroke-dasharray="1 1" /><path d="M4 13h8" stroke="#111" /><path d="M5 4c2-2 4 2 7-1" stroke="#111" fill="none" stroke-dasharray="1 1" /></svg>
        <svg class="icon"><path d="M10 5L3 13" stroke="#111" stroke-width="4" /><path d="M10 6l-6 7" stroke="#dfe4ec" stroke-width="1.500" /><circle cx="12" cy="4" r="3" fill="#c7cdd8" stroke="#111" /><path d="M3 13c-1 3 3 3 5 1" fill="none" stroke="#111" /></svg>
      </div>
      <div class="tray">
        <button class="expand" aria-label="Show hidden icons"><svg class="icon"><path d="M10 4L6 8l4 4" fill="none" stroke="#fff" stroke-width="2" /></svg></button>
        <svg class="icon"><path d="M2 8l9-2 4 5-8 4z" fill="#b7c0b8" stroke="#3c4a41" /><path d="M3 1l6 1-1 2 3 4-4 1-3-4-3 1z" fill="#37a247" stroke="#1d6a2a" stroke-width=".7" /></svg>
        <svg class="icon"><path d="M1 1h14v14H1z" fill="#fff" /><path d="M2 1h4v5l5-5h5L8 8l7 7h-5l-4-5v5H2z" fill="#d9151c" /><path d="M9 8l6 2-1 5-6-5z" fill="#111" /></svg>
        <svg class="icon"><path d="M6 1h9v8H6z" fill="#3d477c" stroke="#c3c7e0" /><path d="M1 5h9v7H1z" fill="#27336c" stroke="#c3c7e0" /><path d="M3 14h6M10 12h4" stroke="#c3c7e0" stroke-width="2" /></svg>
        <svg class="icon"><path d="M8 0l6 2v6c0 4-3 6-6 8-3-2-6-4-6-8V2z" fill="#75c335" stroke="#dff5c6" /><path d="M8 4v8M4 8h8" stroke="#fff" stroke-width="2.600" /></svg>
        <time>15:57</time>
      </div>
    </div>
  </body>
</html>
```

FILE: styles.css
```css
* {
  margin: 0;
  padding: 0;
  box-sizing: border-box;
}
body {
  min-height: 100vh;
  display: flex;
  flex-direction: column;
  background: #ece9d8;
  color: #000;
  font-family: "Noto Sans CJK SC", sans-serif;
  font-size: 12px;
  line-height: 16px;
  font-feature-settings: "hwid";
}
button,
select,
input {
  font: inherit;
  font-feature-settings: inherit;
  color: inherit;
  background: none;
  border: none;
  border-radius: 0;
}
button {
  display: flex;
  align-items: center;
  justify-content: center;
  white-space: nowrap;
}
svg {
  display: block;
  flex: none;
}
.symbols {
  position: absolute;
  width: 0;
  height: 0;
}
.icon {
  width: 16px;
  height: 16px;
}
.window {
  flex: 1;
  display: flex;
  flex-direction: column;
}

/* title and menu */
.titlebar {
  height: 26px;
  display: flex;
  align-items: center;
  gap: 4px;
  padding: 0 2px;
  background: linear-gradient(#3c94fb 0, #2a86f6 8%, #0a5ce8 22%, #0453df 45%, #0162f8 80%, #0164fc 90%, #0348ca 100%);
  color: #fff;
}
.titlebar h1 {
  font-size: 16px;
  font-weight: bold;
  line-height: 16px;
  padding-bottom: 2px;
  flex: 1;
  text-shadow: 1px 1px #0a2f8a;
}
.caption-buttons {
  display: flex;
  gap: 2px;
}
.caption-buttons button {
  width: 21px;
  height: 21px;
  border: 1px solid #fff;
  border-radius: 3px;
  background: linear-gradient(135deg, #7ba4f5, #2a5fe0 45%, #1d4fd0);
}
.caption-buttons .close {
  background: linear-gradient(135deg, #f0a08a, #e0502a 45%, #c93a14);
}
.menubar {
  height: 20px;
  display: flex;
  align-items: center;
}
.menubar > button {
  padding: 0 6px;
}
.menu-icon {
  margin-left: 4px;
}
.doc-buttons {
  margin-left: auto;
  display: flex;
  gap: 2px;
}
.doc-buttons button {
  width: 17px;
  height: 17px;
  background: #f3f2ea;
  border-right: 1px solid #d5d2c2;
  border-bottom: 1px solid #d5d2c2;
}

/* toolbars */
.toolbar-row {
  height: 28px;
  display: flex;
  gap: 2px;
  border-top: 1px solid #fff;
}
.toolbar {
  display: flex;
  align-items: center;
  padding: 0 4px 0 3px;
  border-right: 1px solid #aca899;
  border-bottom: 1px solid #aca899;
}
.grip {
  width: 7px;
  height: 24px;
  margin-right: 2px;
  flex: none;
  border: 1px solid #b5b2a2;
  border-width: 0 1px;
  background: linear-gradient(90deg, #fff 2px, #b5b2a2 2px, #b5b2a2 3px, #fff 3px);
}
.tool {
  width: 23px;
  height: 22px;
  flex: none;
}
.drop {
  width: 13px;
}
.drop svg {
  width: 7px;
  height: 5px;
}
.off {
  opacity: 0.3;
}
.sep {
  width: 6px;
  height: 22px;
  flex: none;
  background: linear-gradient(90deg, transparent 2px, #c5c2b2 2px, #c5c2b2 3px, #fff 3px, #fff 4px, transparent 4px);
}
.combo {
  position: relative;
  height: 22px;
  flex: none;
}
.combo select {
  appearance: none;
  width: 100%;
  height: 100%;
  padding: 0 20px 0 3px;
  background: #fff;
  border: 1px solid #7f9db9;
}
.combo .arrow {
  position: absolute;
  top: 2px;
  right: 2px;
  width: 15px;
  height: 18px;
  background: linear-gradient(90deg, #cbdafb, #b4c8f5);
  border-radius: 2px;
  pointer-events: none;
}
.combo .mark {
  position: absolute;
  top: 2px;
  left: 3px;
  pointer-events: none;
}
.w-style {
  width: 99px;
}
.w-layer {
  width: 300px;
}
.w-layer select {
  padding-left: 85px;
}
.w-color {
  width: 150px;
}
.w-color select {
  padding-left: 18px;
}
.w-ltype {
  width: 160px;
}
.w-ltype select {
  padding-left: 68px;
}
.w-lweight {
  width: 124px;
}
.w-lweight select {
  padding-left: 43px;
}
.w-plot {
  width: 120px;
}
.w-plot select {
  padding-left: 8px;
}
.disabled select {
  background: #ebe8d7;
  border-color: #c9c7ba;
  color: #aca899;
  opacity: 1;
}
.disabled .arrow {
  background: #f3f2ea;
  opacity: 0.4;
}

/* drawing window */
.workspace {
  flex: 1;
  display: flex;
}
.dock {
  display: flex;
  flex-direction: column;
  width: 26px;
  padding-top: 2px;
}
.vertical {
  flex-direction: column;
  width: 25px;
  padding: 0 0 5px;
  border-top: 1px solid #fff;
  border-left: 1px solid #fff;
}
.vertical .grip {
  width: 18px;
  height: 6px;
  margin: 1px 0;
  border-width: 1px 0;
  background: linear-gradient(#fff 2px, #b5b2a2 2px, #b5b2a2 3px, #fff 3px);
}
.order .grip {
  margin-bottom: 4px;
}
.frame {
  flex: 1;
  min-width: 0;
  display: flex;
  flex-direction: column;
  border: 2px solid;
  border-color: #85826f #fff #fff #85826f;
}
.frame-view {
  flex: 1;
  display: flex;
}
.canvas {
  flex: 1;
  min-width: 0;
  background: #000;
}
.dim-text {
  font-family: "Lato", "Liberation Sans", sans-serif;
  font-weight: 300;
  font-size: 25px;
  fill: url(#dashes);
}
.scroll {
  display: flex;
  background: #f9f9f3;
}
.vscroll {
  flex-direction: column;
  width: 17px;
  padding: 0 1px;
}
.scroll-btn {
  width: 15px;
  height: 15px;
  flex: none;
  border: 1px solid #aabbe8;
  border-radius: 2px;
  background: linear-gradient(135deg, #dce6fd, #b5c8f6);
}
.end {
  margin-left: auto;
}
.vscroll .end {
  margin-left: 0;
  margin-top: auto;
}
.thumb {
  width: 15px;
  height: 15px;
  border: 1px solid #aabbe8;
  border-radius: 2px;
  background: repeating-linear-gradient(90deg, #8fa9e8 0 1px, #e3ecff 1px 2px) center / 8px 7px no-repeat #c6d6fb;
}
.vscroll .thumb {
  margin-top: 1px;
  background: repeating-linear-gradient(#8fa9e8 0 1px, #e3ecff 1px 2px) center / 7px 8px no-repeat #c6d6fb;
}
.frame-foot {
  height: 16px;
  display: flex;
  padding-right: 17px;
}
.tab-nav {
  display: flex;
}
.tab-nav button {
  width: 18px;
  height: 15px;
  border-right: 1px solid #c5c2b2;
  border-bottom: 1px solid #c5c2b2;
  background: #f3f2ea;
}
.tabs {
  display: flex;
  padding-left: 3px;
}
.tab {
  position: relative;
  height: 15px;
  padding: 0 8px;
  margin-right: -3px;
  line-height: 14px;
  background: #000;
  clip-path: polygon(0 0, 100% 0, calc(100% - 6px) 100%, 6px 100%);
}
.tab::before {
  content: "";
  position: absolute;
  inset: 0 1px 1px;
  background: #ece9d8;
  clip-path: polygon(0 0, 100% 0, calc(100% - 6px) 100%, 6px 100%);
}
.tab span {
  position: relative;
}
.active {
  color: #fff;
}
.active::before {
  background: #000;
}
.hscroll {
  width: 34%;
  margin-left: auto;
}
.splitter {
  width: 6px;
  margin-right: 1px;
  border: 1px solid #c5c2b2;
}

/* command line */
.command {
  display: flex;
  gap: 3px;
  padding: 5px 7px 3px;
  margin-top: 4px;
  border-top: 2px solid #000;
  font-family: "Liberation Mono", "Noto Sans CJK SC", monospace;
  font-size: 13px;
  line-height: 14px;
}
.tall {
  height: 44px;
}
.command-box {
  flex: 1;
  border-top: 1px solid #000;
  border-left: 1px solid #000;
  background: #fff;
}
.history {
  display: flex;
  justify-content: space-between;
  height: 31px;
  padding-left: 1px;
  border-bottom: 1px solid #8d8b80;
}
.prompt {
  display: flex;
  align-items: center;
  height: 17px;
  padding-left: 1px;
}
.prompt input {
  flex: 1;
  min-width: 0;
  outline: none;
}
.prompt-scroll {
  width: 65px;
  margin-right: 18px;
}

/* status bar */
.statusbar {
  height: 22px;
  display: flex;
  align-items: center;
  gap: 4px;
  padding: 0 2px 0 4px;
  border-top: 2px solid #aca899;
}
.statusbar button {
  height: 18px;
  padding: 0 1px;
  border: 1px solid #fff;
  border-right-color: #aca899;
  border-bottom-color: #aca899;
}
.statusbar .on {
  padding: 0 2px 0 1px;
  border-color: #222 #fff #fff #222;
}
.coords {
  width: 250px;
  height: 18px;
  padding-left: 1px;
  line-height: 14px;
  border: 1px solid #aca899;
  border-right-color: #c9c7ba;
}
.status-tray {
  display: flex;
  gap: 3px;
  margin-left: auto;
  padding: 0 3px;
  border: 1px solid #aca899;
  border-right-color: #fff;
  border-bottom: none;
}
.statusbar .status-menu {
  border: none;
}

/* taskbar */
.taskbar {
  height: 30px;
  display: flex;
  align-items: stretch;
  background: linear-gradient(#3f8cf3 0, #2a63dd 12%, #245bdb 80%, #1c48b4 100%);
  color: #fff;
}
.start {
  width: 97px;
  gap: 5px;
  padding: 0 12px 4px 0;
  font-size: 19px;
  font-style: italic;
  border-radius: 0 12px 12px 0;
  background: linear-gradient(#69b95f 0, #3a9a3a 15%, #379537 80%, #28752a 100%);
  box-shadow: 1px 0 3px #14377f;
  text-shadow: 1px 1px 1px #1d4d1d;
}
.quick {
  width: 101px;
  display: flex;
  align-items: center;
  gap: 7px;
  padding: 0 0 4px 12px;
}
.more {
  margin-left: 5px;
  margin-bottom: 10px;
}
.tasks {
  flex: 1;
  display: flex;
  gap: 2px;
  padding: 3px 0;
}
.tasks button {
  flex: 0 1 158px;
  min-width: 0;
  justify-content: flex-start;
  gap: 4px;
  padding: 0 9px 4px;
  overflow: hidden;
  border-radius: 2px;
  background: linear-gradient(#5b9bfb, #3c81f3 20%, #3a7cf0 85%, #2c63d6);
}
.tasks .current {
  background: #1c4cb2;
  box-shadow: inset 1px 1px 2px #102f7c;
}
.language {
  display: flex;
  align-items: center;
  gap: 6px;
  padding: 0 18px 4px 0;
}
.tray {
  display: flex;
  align-items: center;
  gap: 3px;
  padding: 0 13px 4px 0;
  border-left: 1px solid #0d3c9c;
  background: linear-gradient(#2fb4f7 0, #1393eb 15%, #128fe8 80%, #0d6fc4 100%);
}
.expand {
  width: 18px;
  height: 18px;
  margin-left: -9px;
  border-radius: 50%;
  background: #2c9cf0;
  border: 1px solid #8fd0fb;
}
.tray time {
  margin-left: 4px;
}
```
